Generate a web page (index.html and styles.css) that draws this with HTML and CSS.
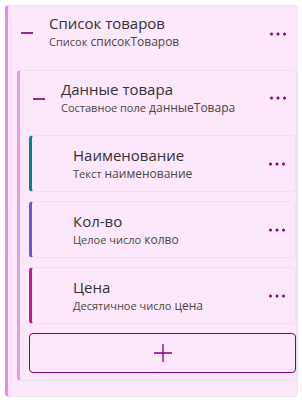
FILE: index.html
```html
<!DOCTYPE html>
<html lang="ru">
<head>
<meta charset="utf-8">
<link rel="stylesheet" href="styles.css">
</head>
<body>
<div class="card outer">
  <div class="head">
    <span class="minus"></span>
    <div class="text">
      <div class="title">Список товаров</div>
      <div class="sub"><span class="type">Список</span> <span class="name">списокТоваров</span></div>
    </div>
    <svg class="dots" width="16" height="4" viewBox="0 0 16 4"><circle cx="1.5" cy="2" r="1.5"/><circle cx="8" cy="2" r="1.5"/><circle cx="14.5" cy="2" r="1.5"/></svg>
  </div>
  <div class="card inner">
    <div class="head">
      <span class="minus"></span>
      <div class="text">
        <div class="title">Данные товара</div>
        <div class="sub"><span class="type">Составное поле</span> <span class="name">данныеТовара</span></div>
      </div>
      <svg class="dots" width="16" height="4" viewBox="0 0 16 4"><circle cx="1.5" cy="2" r="1.5"/><circle cx="8" cy="2" r="1.5"/><circle cx="14.5" cy="2" r="1.5"/></svg>
    </div>
    <div class="fields">
      <div class="field teal">
        <div class="text">
          <div class="title">Наименование</div>
          <div class="sub"><span class="type">Текст</span> <span class="name">наименование</span></div>
        </div>
        <svg class="dots" width="16" height="4" viewBox="0 0 16 4"><circle cx="1.5" cy="2" r="1.5"/><circle cx="8" cy="2" r="1.5"/><circle cx="14.5" cy="2" r="1.5"/></svg>
      </div>
      <div class="field violet">
        <div class="text">
          <div class="title">Кол-во</div>
          <div class="sub"><span class="type">Целое число</span> <span class="name">колво</span></div>
        </div>
        <svg class="dots" width="16" height="4" viewBox="0 0 16 4"><circle cx="1.5" cy="2" r="1.5"/><circle cx="8" cy="2" r="1.5"/><circle cx="14.5" cy="2" r="1.5"/></svg>
      </div>
      <div class="field magenta">
        <div class="text">
          <div class="title">Цена</div>
          <div class="sub"><span class="type">Десятичное число</span> <span class="name">цена</span></div>
        </div>
        <svg class="dots" width="16" height="4" viewBox="0 0 16 4"><circle cx="1.5" cy="2" r="1.5"/><circle cx="8" cy="2" r="1.5"/><circle cx="14.5" cy="2" r="1.5"/></svg>
      </div>
      <div class="add">
        <svg width="18" height="18" viewBox="0 0 18 18"><path d="M9 0V18M0 9H18" stroke="#800080" stroke-width="1.3" fill="none"/></svg>
      </div>
    </div>
  </div>
</div>
</body>
</html>
```

FILE: styles.css
```css
html, body {
  margin: 0;
  padding: 0;
  background: #ffffff;
}
body {
  padding: 5px 4px 0 5px;
  font-family: "Open Sans", "Noto Sans", sans-serif;
  color: #323130;
}
.card {
  background: #fde7fb;
  border: 1px solid #ebe4ee;
  border-radius: 4px;
  box-sizing: border-box;
}
.outer {
  width: 293px;
  height: 392px;
  border-left: 3px solid #ee82ee;
  padding: 0 0 15px 9px;
}
.inner {
  border-left: 3px solid #dda0dd;
  padding: 0 0 7px 9px;
  margin: 0;
}
.head {
  display: flex;
  align-items: center;
  padding: 7px 11px 19px 4px;
}
.inner .head {
  padding: 8px 10px 18px 4px;
}
.minus {
  width: 12px;
  height: 1.4px;
  background: #8e2b8e;
  margin-right: 16px;
  flex: none;
  margin-top: 2px;
}
.text {
  flex: 1;
  min-width: 0;
}
.title {
  font-size: 15px;
  line-height: 20px;
  color: #323130;
  white-space: nowrap;
}
.sub {
  font-size: 12px;
  line-height: 18px;
  white-space: nowrap;
  color: #484644;
}
.sub .type {
  font-size: 11px;
}
.dots {
  flex: none;
  fill: #800080;
}
.outer > .head .dots {
  margin-top: 3px;
}
.fields {
  display: flex;
  flex-direction: column;
  gap: 9px;
}
.field {
  height: 57px;
  box-sizing: border-box;
  background: #fde7fb;
  border: 1px solid #ebe4ee;
  border-radius: 4px;
  display: flex;
  align-items: center;
  padding: 0 10px 0 41px;
}
.teal { border-left: 3px solid #038387; }
.violet { border-left: 3px solid #6b5acd; }
.magenta { border-left: 3px solid #c8178b; }
.add {
  height: 40px;
  box-sizing: border-box;
  border: 1.3px solid #800080;
  border-radius: 4px;
  display: flex;
  align-items: center;
  justify-content: center;
}
.add svg {
  display: block;
}
```
